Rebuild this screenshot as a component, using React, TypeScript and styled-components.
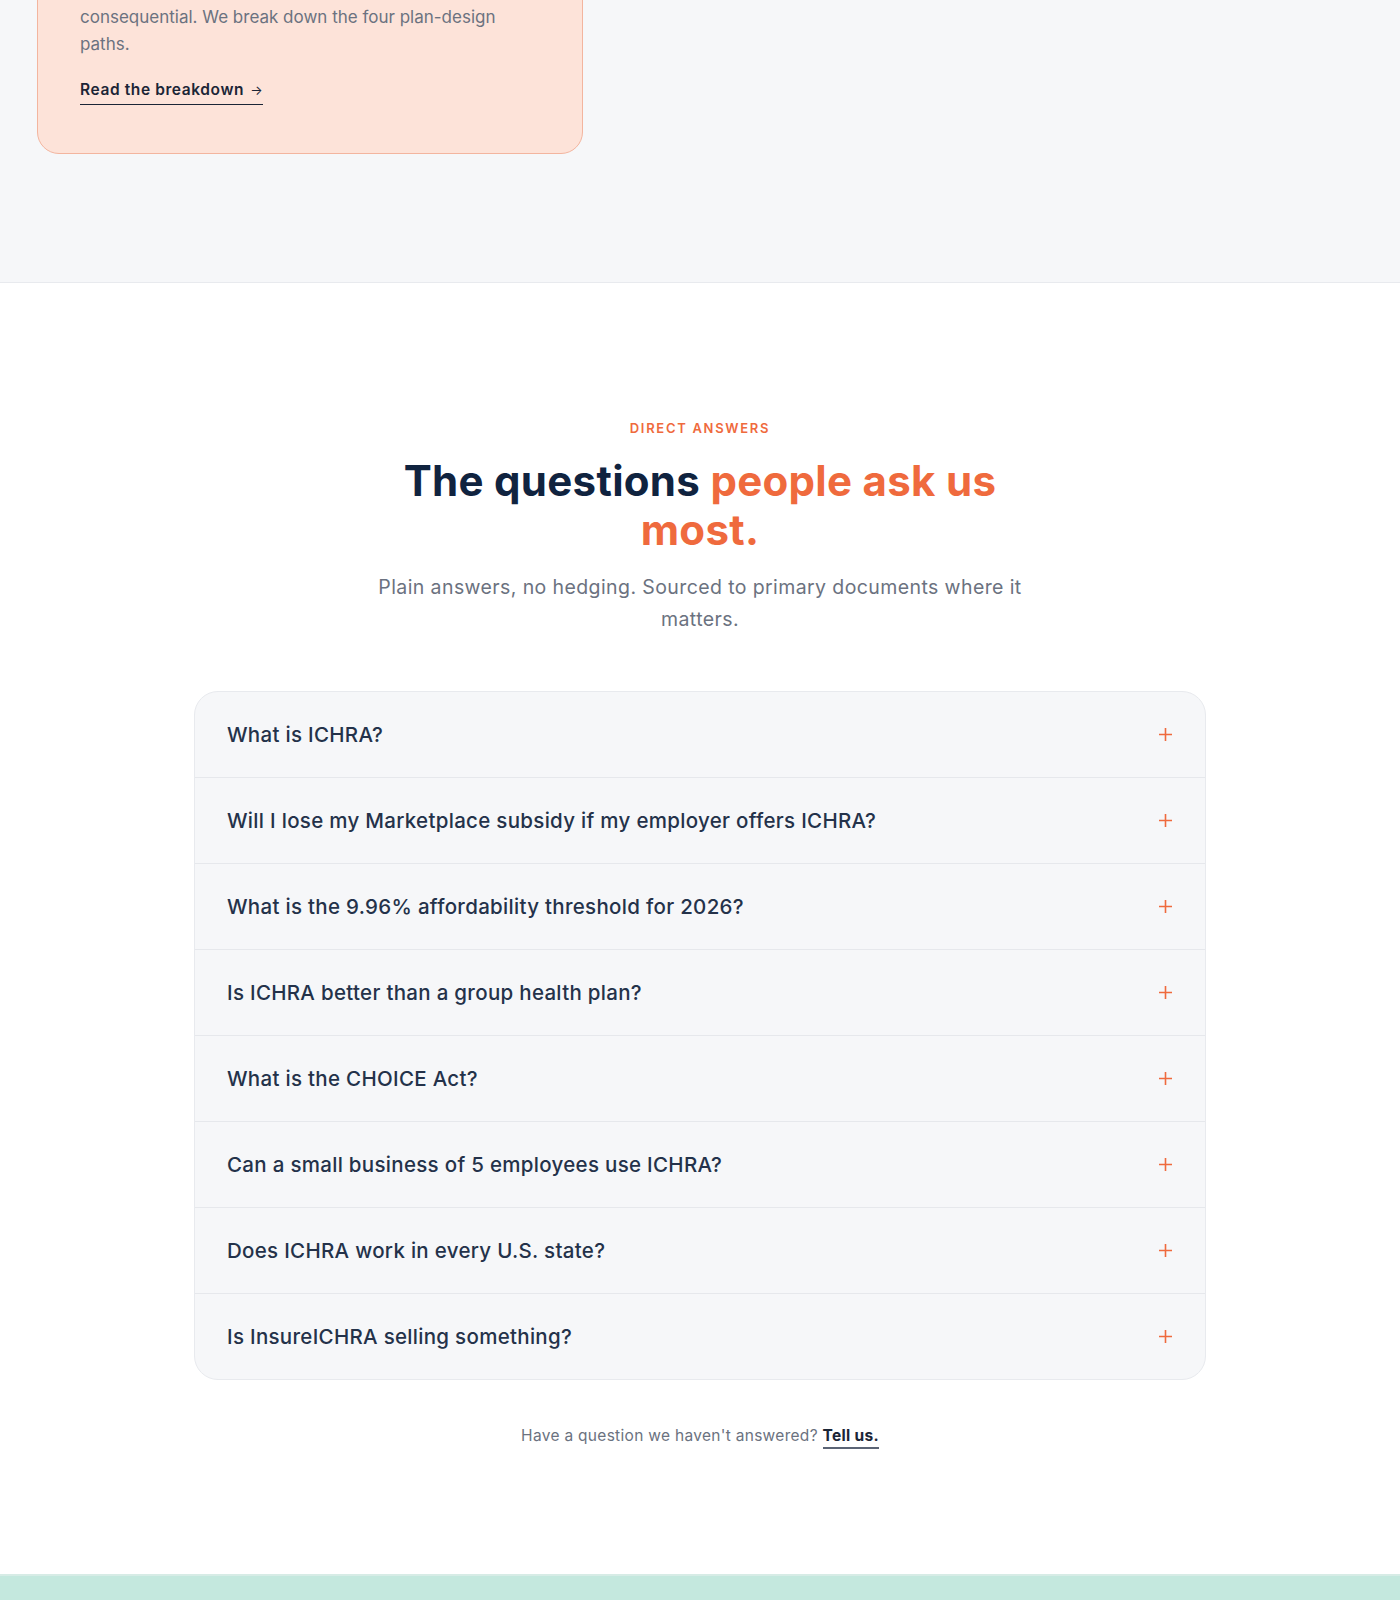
import React, { useState } from "react";
import styled, { createGlobalStyle } from "styled-components";

const GlobalStyle = createGlobalStyle`
  * { box-sizing: border-box; }
  html, body { margin: 0; padding: 0; background: #ffffff; }
  body {
    font-family: Inter, "Noto Sans", "Liberation Sans", sans-serif;
    -webkit-font-smoothing: antialiased;
    color: #1e293b;
  }
`;

const navy = "#10233f";
const orange = "#ef6a3d";
const muted = "#6b7280";

// Resources strip (tail end of the guide cards)
const ResourceStrip = styled.section`
  background: #f6f7f9;
  border-bottom: 1px solid #e8eaee;
  padding: 0 37px 128px;
  overflow: hidden;
`;

const GuideCard = styled.article`
  width: 546px;
  margin-top: -67px;
  padding: 42px 42px 48px;
  background: #fde3d9;
  border: 1px solid #f3b59f;
  border-radius: 22px;
`;

const GuideText = styled.p`
  margin: 0;
  font-size: 17px;
  line-height: 27.5px;
  color: ${muted};
  letter-spacing: 0;
`;

const GuideLink = styled.a`
  display: inline-block;
  margin-top: 19px;
  padding-bottom: 2px;
  font-size: 15.5px;
  line-height: 24px;
  font-weight: 600;
  letter-spacing: 0.6px;
  color: #1b2536;
  text-decoration: none;
  border-bottom: 1.5px solid #1b2536;
  cursor: pointer;
`;

const Arrow = styled.span`
  margin-left: 6px;
  font-size: 13px;
  font-weight: 400;
`;

// FAQ section
const FaqSection = styled.section`
  display: flex;
  flex-direction: column;
  align-items: center;
  padding: 136px 24px 127px;
  background: #ffffff;
`;

const Eyebrow = styled.div`
  font-size: 13px;
  line-height: 18px;
  font-weight: 600;
  letter-spacing: 1.7px;
  text-transform: uppercase;
  color: ${orange};
`;

const Heading = styled.h2`
  margin: 19px 0 0;
  font-size: 42px;
  line-height: 49px;
  font-weight: 700;
  letter-spacing: 0.3px;
  color: ${navy};
  text-align: center;
`;

const Accent = styled.span`
  color: ${orange};
`;

const Lede = styled.p`
  margin: 17px 0 0;
  max-width: 700px;
  font-size: 19.5px;
  line-height: 32px;
  color: ${muted};
  text-align: center;
  letter-spacing: 0.4px;
`;

const FaqList = styled.div`
  width: 1012px;
  margin-top: 56px;
  border: 1px solid #e8eaee;
  border-radius: 24px;
  overflow: hidden;
  background: #f6f7f9;
`;

const FaqItem = styled.div<{ $last: boolean }>`
  border-bottom: ${(p) => (p.$last ? "none" : "1px solid #e6e8ec")};
`;

const FaqButton = styled.button`
  width: 100%;
  height: 85px;
  display: flex;
  align-items: center;
  justify-content: space-between;
  padding: 0 32px;
  background: transparent;
  border: none;
  font-family: inherit;
  font-size: 20.5px;
  font-weight: 500;
  letter-spacing: 0.3px;
  color: #24324a;
  text-align: left;
  cursor: pointer;
`;

const Answer = styled.div`
  padding: 0 32px 28px;
  font-size: 17px;
  line-height: 28px;
  color: ${muted};
`;

const Footnote = styled.p`
  margin: 45px 0 0;
  font-size: 15.5px;
  line-height: 22px;
  color: ${muted};
  letter-spacing: 0.3px;
`;

const TellUs = styled.a`
  font-weight: 700;
  color: #1b2536;
  text-decoration: none;
  border-bottom: 2px solid #5b6475;
  padding-bottom: 2px;
  cursor: pointer;
`;

const Band = styled.div`
  height: 26px;
  background: #c4e8de;
  border-top: 2px solid #d7ece6;
`;

const PlusIcon = () => (
  <svg width="15" height="15" viewBox="0 0 15 15" aria-hidden="true">
    <path d="M7.5 1v13M1 7.5h13" stroke={orange} strokeWidth="1.6" />
  </svg>
);

const questions = [
  "What is ICHRA?",
  "Will I lose my Marketplace subsidy if my employer offers ICHRA?",
  "What is the 9.96% affordability threshold for 2026?",
  "Is ICHRA better than a group health plan?",
  "What is the CHOICE Act?",
  "Can a small business of 5 employees use ICHRA?",
  "Does ICHRA work in every U.S. state?",
  "Is InsureICHRA selling something?",
];

const App: React.FC = () => {
  const [open, setOpen] = useState<number | null>(null);

  return (
    <>
      <GlobalStyle />
      <ResourceStrip>
        <GuideCard>
          <GuideText>
            Class structures and contribution tiers are quietly
            <br />
            consequential. We break down the four plan-design
            <br />
            paths.
          </GuideText>
          <GuideLink>
            Read the breakdown<Arrow>→</Arrow>
          </GuideLink>
        </GuideCard>
      </ResourceStrip>

      <FaqSection>
        <Eyebrow>Direct answers</Eyebrow>
        <Heading>
          The questions <Accent>people ask us</Accent>
          <br />
          <Accent>most.</Accent>
        </Heading>
        <Lede>
          Plain answers, no hedging. Sourced to primary documents where it
          <br />
          matters.
        </Lede>

        <FaqList>
          {questions.map((q, i) => (
            <FaqItem key={q} $last={i === questions.length - 1}>
              <FaqButton onClick={() => setOpen(open === i ? null : i)}>
                <span>{q}</span>
                <PlusIcon />
              </FaqButton>
              {open === i && <Answer>Answer coming soon.</Answer>}
            </FaqItem>
          ))}
        </FaqList>

        <Footnote>
          Have a question we haven't answered? <TellUs>Tell us.</TellUs>
        </Footnote>
      </FaqSection>
      <Band />
    </>
  );
};

export default App;
